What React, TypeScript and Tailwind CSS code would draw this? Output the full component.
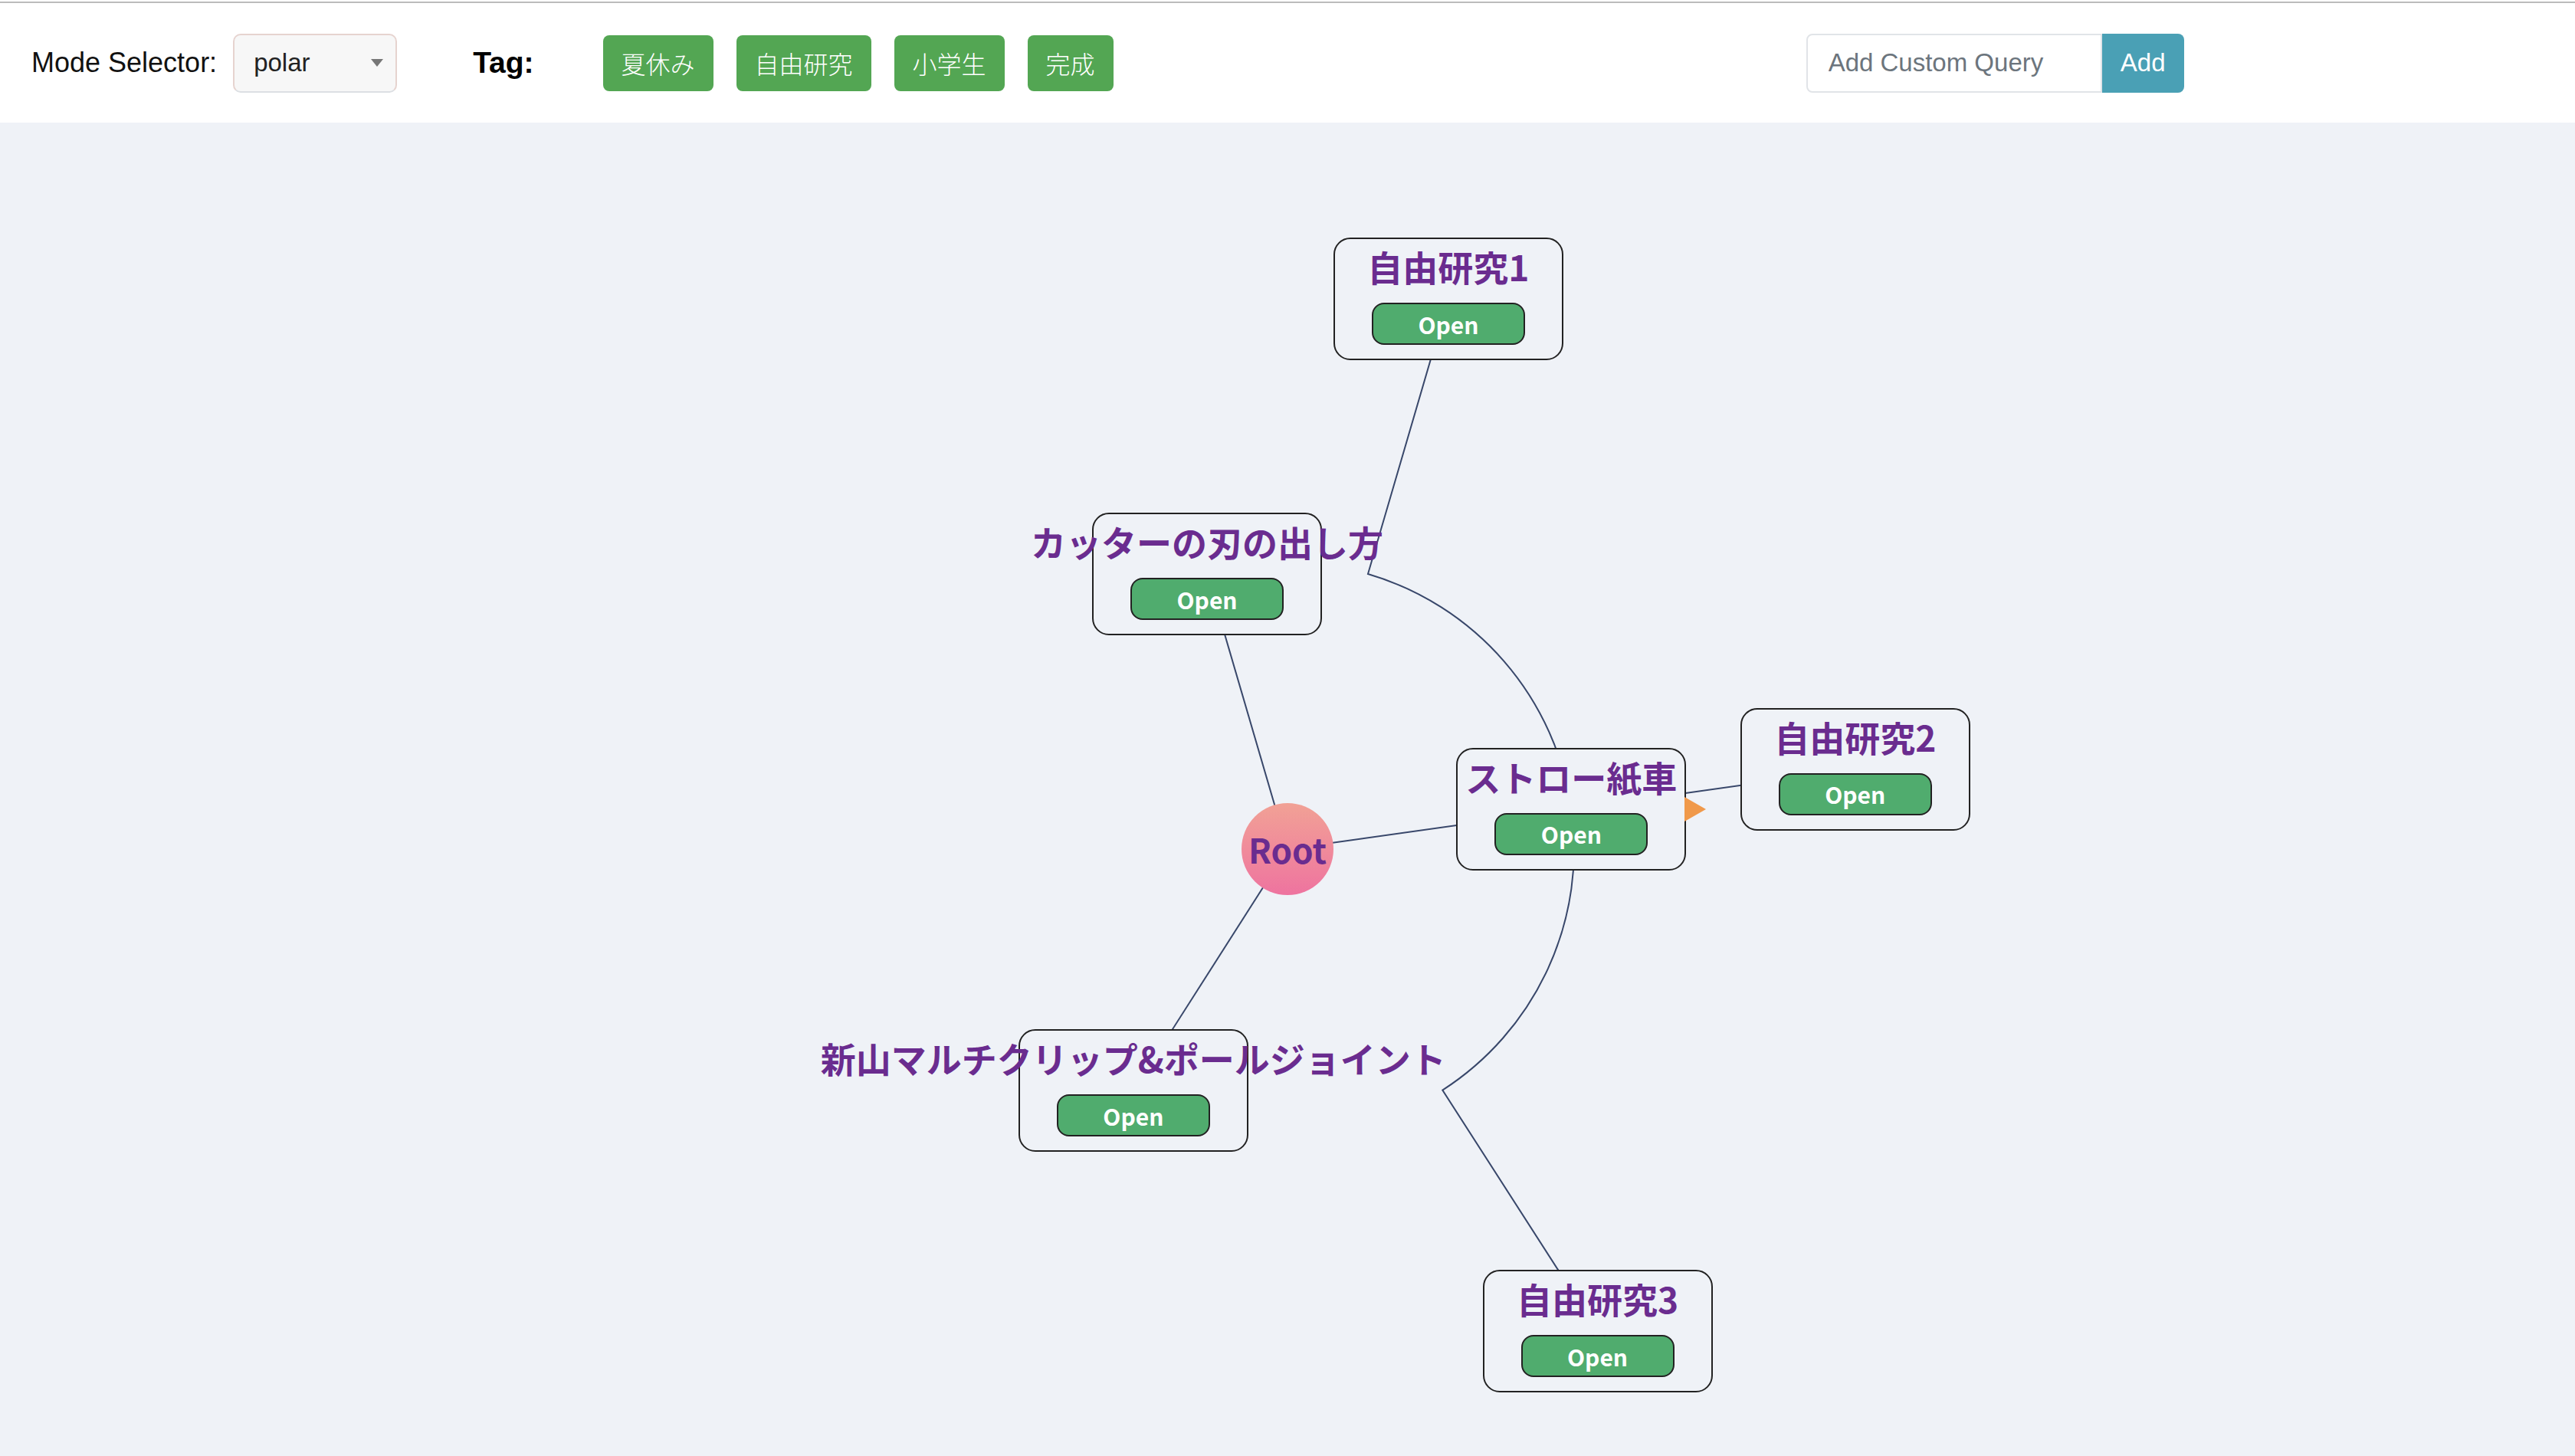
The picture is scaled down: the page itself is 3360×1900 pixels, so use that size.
import React from "react";

const ROOT = { x: 1680, y: 948 };
const R1 = 374;
const R2 = 748;

const pol = (r: number, deg: number) => {
  const a = (deg * Math.PI) / 180;
  return { x: ROOT.x + r * Math.cos(a), y: ROOT.y + r * Math.sin(a) };
};

const A_CUTTER = -106.3;
const A_STRAW = -8;
const A_NEW = 122.54;
const A_FREE1 = -73.7;
const A_FREE3 = 57.26;

interface NodeItem {
  title: string;
  x: number;
  y: number;
  expand?: boolean;
}

const cutter = pol(R1, A_CUTTER);
const straw = pol(R1, A_STRAW);
const niiyama = pol(R1, A_NEW);
const free1 = pol(R2, A_FREE1);
const free2 = pol(R2, A_STRAW);
const free3 = pol(R2, A_FREE3);
const kink1 = pol(R1, A_FREE1);
const kink3 = pol(R1, A_FREE3);

const nodes: NodeItem[] = [
  { title: "自由研究1", ...free1 },
  { title: "カッターの刃の出し方", ...cutter },
  { title: "自由研究2", ...free2 },
  { title: "ストロー紙車", ...straw, expand: true },
  { title: "新山マルチクリップ&ポールジョイント", ...niiyama },
  { title: "自由研究3", ...free3 },
];

const tags = ["夏休み", "自由研究", "小学生", "完成"];

const MapNode: React.FC<{ node: NodeItem }> = ({ node }) => (
  <div
    className="absolute -translate-x-1/2 -translate-y-1/2 w-[300px] h-[160px] rounded-[22px] border-2 border-[#222] bg-[#eff2f7] flex flex-col items-center pt-[7px]"
    style={{ left: node.x, top: node.y }}
  >
    <div className="whitespace-nowrap text-[46px] leading-[56px] font-bold text-[#6a2c8f]">
      {node.title}
    </div>
    <button className="mt-[20px] w-[200px] h-[55px] rounded-[16px] border-2 border-[#222] bg-[#50ac6e] text-white text-[30px] font-bold leading-none">
      Open
    </button>
    {node.expand && (
      <div className="absolute left-full top-1/2 -translate-y-1/2 w-0 h-0 border-l-[28px] border-l-[#f0994a] border-y-[16px] border-y-transparent" />
    )}
  </div>
);

export default function App() {
  const arc1 = `M ${straw.x} ${straw.y} A ${R1} ${R1} 0 0 0 ${kink1.x} ${kink1.y} L ${free1.x} ${free1.y}`;
  const arc3 = `M ${straw.x} ${straw.y} A ${R1} ${R1} 0 0 1 ${kink3.x} ${kink3.y} L ${free3.x} ${free3.y}`;

  return (
    <div
      className="w-[3360px] min-h-[1900px] bg-[#eff2f7]"
      style={{ fontFamily: '"Liberation Sans", Arial, "Noto Sans CJK JP", sans-serif' }}
    >
      {/* Header */}
      <div className="h-[160px] bg-white flex flex-col">
        <div className="h-[2px] mt-[2px] bg-[#bcbcbc]" />
        <div className="flex-1 flex items-center pl-[41px]">
          <span className="text-[36px] text-[#111]">Mode Selector:</span>
          <div className="ml-[21px] w-[214px] h-[77px] rounded-[10px] border-2 border-[#e6d3cf] border-b-[#dcdfe3] bg-[#f7f7f7] flex items-center justify-between pl-[25px] pr-[16px]">
            <span className="text-[33px] text-[#222]">polar</span>
            <span className="w-0 h-0 border-t-[10px] border-t-[#777] border-x-[8px] border-x-transparent" />
          </div>
          <span className="ml-[99px] text-[39px] font-bold text-black">Tag:</span>
          <div className="ml-[90px] flex gap-[30px]">
            {tags.map((t) => (
              <div
                key={t}
                className="h-[73px] px-[24px] rounded-[8px] bg-[#53a653] text-white text-[32px] font-light flex items-center"
                style={{ fontFamily: '"Noto Sans CJK JP", sans-serif' }}
              >
                {t}
              </div>
            ))}
          </div>
          <div className="ml-[904px] flex h-[77px]">
            <input
              placeholder="Add Custom Query"
              className="w-[386px] h-full rounded-l-[8px] border-2 border-[#e1e4e8] bg-white pl-[27px] text-[33px] placeholder:text-[#6c757d] outline-none"
            />
            <button className="w-[107px] h-full rounded-r-[8px] bg-[#4aa0b5] text-white text-[33px]">
              Add
            </button>
          </div>
        </div>
      </div>

      {/* Canvas */}
      <div
        className="relative w-full h-[1740px] bg-[#eff2f7] overflow-hidden"
        style={{ fontFamily: '"Noto Sans CJK JP", "Noto Sans", sans-serif' }}
      >
        <svg className="absolute inset-0" width="3360" height="1740">
          <g stroke="#38476a" strokeWidth="2" fill="none">
            <line x1={ROOT.x} y1={ROOT.y} x2={cutter.x} y2={cutter.y} />
            <line x1={ROOT.x} y1={ROOT.y} x2={straw.x} y2={straw.y} />
            <line x1={ROOT.x} y1={ROOT.y} x2={niiyama.x} y2={niiyama.y} />
            <line x1={straw.x} y1={straw.y} x2={free2.x} y2={free2.y} />
            <path d={arc1} />
            <path d={arc3} />
          </g>
        </svg>

        {nodes.map((n) => (
          <MapNode key={n.title} node={n} />
        ))}

        <div
          className="absolute -translate-x-1/2 -translate-y-1/2 w-[120px] h-[120px] rounded-full bg-gradient-to-b from-[#f1a195] to-[#ee739f] flex items-center justify-center"
          style={{ left: ROOT.x, top: ROOT.y }}
        >
          <span className="text-[44px] font-bold text-[#6a2c8f] leading-none">Root</span>
        </div>
      </div>
    </div>
  );
}
